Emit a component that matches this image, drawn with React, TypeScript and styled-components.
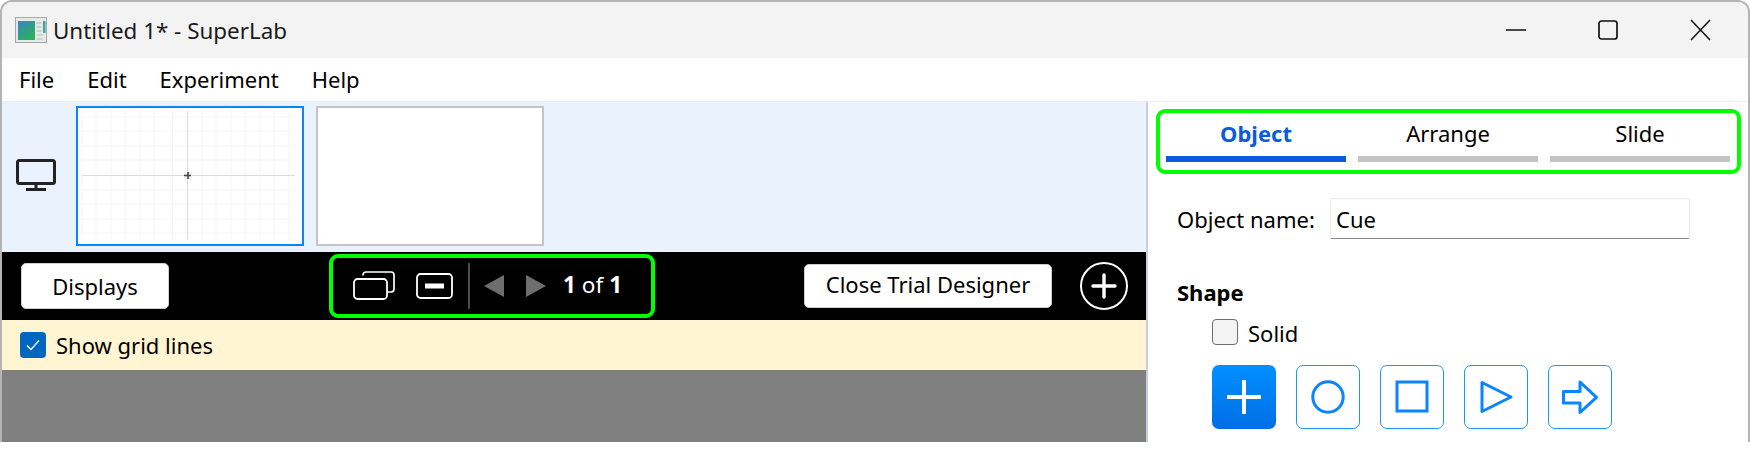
import React from "react";
import styled, { createGlobalStyle } from "styled-components";

const Global = createGlobalStyle`
  html, body { margin: 0; padding: 0; background: #fff; }
  body { width: 1750px; height: 460px; overflow: hidden; font-family: "Noto Sans", "Open Sans", sans-serif; color: #000; }
`;

const Page = styled.div`
  width: 1750px;
  height: 460px;
  background: #fff;
`;
const Window = styled.div`
  box-sizing: border-box;
  height: 442px;
  border: 2px solid #b4b4b4;
  border-bottom: 0;
  border-radius: 12px 12px 0 0;
  display: flex;
  flex-direction: column;
  overflow: hidden;
`;
const TitleBar = styled.div`
  height: 56px;
  flex: none;
  background: #f3f3f3;
  display: flex;
  align-items: center;
  padding: 0 37px 0 13px;
`;
const AppIcon = styled.svg`
  width: 32px;
  height: 26px;
  margin-right: 6px;
  flex: none;
`;
const TitleText = styled.span`
  font-size: 22.4px;
  color: #1a1a1a;
  flex: 1;
`;
const WindowControls = styled.div`
  display: flex;
  align-items: center;
  gap: 71px;
`;
const MenuBar = styled.div`
  height: 43px;
  flex: none;
  display: flex;
  align-items: center;
  gap: 33px;
  padding: 0 0 2px 17px;
  box-sizing: border-box;
  font-size: 22px;
`;
const Body = styled.div`
  flex: 1;
  display: grid;
  grid-template-columns: 1146px 1fr;
  min-height: 0;
  border-top: 1px solid #eeeeee;
`;
const LeftPane = styled.div`
  display: flex;
  flex-direction: column;
  border-right: 2px solid #c9cce3;
`;
const ThumbStrip = styled.div`
  height: 150px;
  flex: none;
  background: #eaf2fe;
  display: flex;
  align-items: flex-start;
  padding: 4px 0 0 14px;
  box-sizing: border-box;
`;
const MonitorIcon = styled.svg`
  width: 40px;
  height: 32px;
  margin: 53px 20px 0 0;
  flex: none;
`;
const Thumb = styled.div<{ $selected?: boolean }>`
  box-sizing: border-box;
  width: 228px;
  height: 140px;
  margin-right: 12px;
  background: #fff;
  border: 2px solid ${(p) => (p.$selected ? "#0a84ff" : "#c4c4c4")};
  flex: none;
  display: flex;
`;
const Toolbar = styled.div`
  height: 68px;
  flex: none;
  background: #000;
  display: flex;
  align-items: center;
  box-sizing: border-box;
  padding-left: 19px;
`;
const ToolButton = styled.button<{ $w: number; $h: number; $ml: number; $lift?: number }>`
  box-sizing: border-box;
  width: ${(p) => p.$w}px;
  height: ${(p) => p.$h}px;
  margin-left: ${(p) => p.$ml}px;
  background: #fff;
  border: 1px solid #cfcfcf;
  border-radius: 5px;
  font: inherit;
  font-size: 22px;
  color: #000;
  padding: 0 0 ${(p) => p.$lift ?? 0}px;
  flex: none;
`;
const GreenGroup = styled.div`
  box-sizing: border-box;
  margin-left: 160px;
  width: 326px;
  height: 64px;
  border: 4px solid #00ff00;
  border-radius: 9px;
  display: flex;
  align-items: center;
  flex: none;
  color: #fff;
`;
const StackIcon = styled.svg`
  width: 42px;
  height: 30px;
  margin-left: 20px;
  flex: none;
`;
const MinusIcon = styled.svg`
  width: 38px;
  height: 26px;
  margin-left: 21px;
  flex: none;
`;
const Divider = styled.div`
  width: 2px;
  height: 46px;
  background: #4d4d4d;
  margin: 0 14px 0 14px;
  flex: none;
`;
const ArrowIcon = styled.svg<{ $ml?: number }>`
  width: 20px;
  height: 22px;
  margin-left: ${(p) => p.$ml ?? 0}px;
  flex: none;
`;
const PageCount = styled.span`
  font-size: 22.6px;
  margin: 0 0 4px 17px;
  b { font-weight: 700; }
`;
const AddIcon = styled.svg`
  width: 48px;
  height: 48px;
  margin-left: 28px;
  flex: none;
`;
const Notice = styled.div`
  height: 50px;
  flex: none;
  background: #fff5d2;
  display: flex;
  align-items: center;
  padding-left: 18px;
  font-size: 22px;
`;
const CheckBox = styled.div<{ $checked?: boolean }>`
  box-sizing: border-box;
  width: 26px;
  height: 26px;
  border-radius: 4px;
  background: ${(p) => (p.$checked ? "#0067c0" : "#f3f3f3")};
  border: ${(p) => (p.$checked ? "0" : "1.5px solid #6e6e6e")};
  display: flex;
  align-items: center;
  justify-content: center;
  flex: none;
`;
const NoticeLabel = styled.span`
  margin-left: 10px;
`;
const Canvas = styled.div`
  flex: 1;
  background: #808080;
`;
const RightPane = styled.div`
  display: flex;
  flex-direction: column;
  background: #fff;
  font-size: 22px;
`;
const TabGroup = styled.div`
  box-sizing: border-box;
  margin: 7px 0 0 8px;
  width: 585px;
  height: 65px;
  border: 4px solid #00ff00;
  border-radius: 9px;
  display: grid;
  grid-template-columns: repeat(3, 180px);
  column-gap: 12px;
  padding: 0 6px;
  flex: none;
`;
const Tab = styled.div<{ $active?: boolean }>`
  height: 49px;
  box-sizing: border-box;
  border-bottom: 6px solid ${(p) => (p.$active ? "#0a5be0" : "#c4c4c4")};
  display: flex;
  justify-content: center;
  align-items: center;
  padding-bottom: 4px;
  font-weight: ${(p) => (p.$active ? 700 : 400)};
  color: ${(p) => (p.$active ? "#0a5be0" : "#000")};
`;
const NameRow = styled.div`
  display: flex;
  align-items: center;
  margin: 24px 0 0 29px;
  height: 41px;
  flex: none;
`;
const NameLabel = styled.span`
  width: 153px;
  flex: none;
`;
const NameInput = styled.div`
  box-sizing: border-box;
  width: 360px;
  height: 41px;
  border: 1px solid #ececec;
  border-bottom: 1px solid #868686;
  border-radius: 2px;
  padding-left: 5px;
  display: flex;
  align-items: center;
`;
const SectionTitle = styled.div`
  font-weight: 700;
  margin: 40px 0 0 29px;
  height: 27px;
  line-height: 27px;
  flex: none;
`;
const SolidRow = styled.div`
  display: flex;
  align-items: center;
  gap: 10px;
  margin: 12px 0 0 64px;
  height: 27px;
  flex: none;
`;
const SolidLabel = styled.span`
  margin-top: 3px;
`;
const ShapeRow = styled.div`
  display: flex;
  gap: 20px;
  margin: 20px 0 0 64px;
  flex: none;
`;
const ShapeButton = styled.div<{ $active?: boolean }>`
  box-sizing: border-box;
  width: 64px;
  height: 64px;
  border-radius: 7px;
  border: ${(p) => (p.$active ? "0" : "1px solid #1f95f5")};
  background: ${(p) => (p.$active ? "linear-gradient(#0090ff, #006ee6)" : "#fff")};
  display: flex;
  align-items: center;
  justify-content: center;
`;
const ShapeIcon = styled.svg`
  width: 40px;
  height: 40px;
`;

const gridV = [-105, -91, -76, -62, -47, -33, -14.5, 15, 29, 44, 58, 73, 87, 102];
const gridH = [-58, -44, -29, -15, 15, 29, 44, 58];

export default function App() {
  return (
    <Page>
      <Global />
      <Window>
        <TitleBar>
          <AppIcon viewBox="0 0 32 26">
            <defs>
              <linearGradient id="pane" x1="0" y1="0" x2="0.6" y2="1">
                <stop offset="0" stopColor="#3a86c4" />
                <stop offset="1" stopColor="#2cb05a" />
              </linearGradient>
            </defs>
            <rect x="0.5" y="0.5" width="31" height="25" fill="#e6e9ea" stroke="#a4a9ac" />
            <rect x="3" y="4" width="17" height="19" fill="url(#pane)" />
            <rect x="28" y="4" width="2.5" height="12" fill="#3aa59a" />
            <path d="M21.5 6h5M21.5 10h5M21.5 14h5M21.5 18h6M21.5 22h6" stroke="#b4babc" strokeWidth="1.2" />
          </AppIcon>
          <TitleText>Untitled 1* - SuperLab</TitleText>
          <WindowControls>
            <svg width="21" height="22" viewBox="0 0 21 22">
              <path d="M0 11h20" stroke="#111" strokeWidth="1.6" />
            </svg>
            <svg width="21" height="22" viewBox="0 0 21 22">
              <rect x="1" y="2" width="18" height="18" rx="2.5" fill="none" stroke="#111" strokeWidth="1.7" />
            </svg>
            <svg width="21" height="22" viewBox="0 0 21 22">
              <path d="M1 1l19 20M20 1L1 21" stroke="#111" strokeWidth="1.5" />
            </svg>
          </WindowControls>
        </TitleBar>
        <MenuBar>
          <span>File</span>
          <span>Edit</span>
          <span>Experiment</span>
          <span>Help</span>
        </MenuBar>
        <Body>
          <LeftPane>
            <ThumbStrip>
              <MonitorIcon viewBox="0 0 40 32">
                <rect x="1.5" y="1.5" width="37" height="23" rx="2" fill="none" stroke="#222" strokeWidth="3" />
                <path d="M20 25v5M10 30.5h20" stroke="#222" strokeWidth="3" />
              </MonitorIcon>
              <Thumb $selected>
                <svg width="224" height="136" viewBox="-109 -67 224 136">
                  {gridV.map((x) => (
                    <line key={x} x1={x} x2={x} y1="-64" y2="65" stroke="#f5f5f5" />
                  ))}
                  {gridH.map((y) => (
                    <line key={y} y1={y} y2={y} x1="-105" x2="108" stroke="#f5f5f5" />
                  ))}
                  <line x1="0.5" x2="0.5" y1="-64" y2="65" stroke="#dcdcdc" />
                  <line y1="0.5" y2="0.5" x1="-105" x2="108" stroke="#dcdcdc" />
                  <rect x="-3" y="-3" width="8" height="8" fill="#efefef" />
                  <path d="M1 -3v7M-3 0.5h7" stroke="#444" strokeWidth="1.6" />
                </svg>
              </Thumb>
              <Thumb />
            </ThumbStrip>
            <Toolbar>
              <ToolButton $w={148} $h={46} $ml={0}>Displays</ToolButton>
              <GreenGroup>
                <StackIcon viewBox="0 0 42 30">
                  <path d="M10 4.5V4a3 3 0 0 1 3-3h25a3 3 0 0 1 3 3v14a3 3 0 0 1-3 3h-3" fill="none" stroke="#fff" strokeWidth="1.7" />
                  <rect x="1" y="8" width="33" height="20" rx="3.5" fill="none" stroke="#fff" strokeWidth="1.8" />
                </StackIcon>
                <MinusIcon viewBox="0 0 38 26">
                  <rect x="1" y="1" width="35" height="24" rx="3.5" fill="none" stroke="#fff" strokeWidth="1.8" />
                  <rect x="9" y="10.5" width="19" height="5" fill="#fff" />
                </MinusIcon>
                <Divider />
                <ArrowIcon viewBox="0 0 20 22">
                  <path d="M20 0v22L0 11z" fill="#6e6e6e" />
                </ArrowIcon>
                <ArrowIcon $ml={22} viewBox="0 0 20 22">
                  <path d="M0 0v22l20-11z" fill="#6e6e6e" />
                </ArrowIcon>
                <PageCount>
                  <b>1</b> of <b>1</b>
                </PageCount>
              </GreenGroup>
              <ToolButton $w={248} $h={44} $ml={149} $lift={4}>Close Trial Designer</ToolButton>
              <AddIcon viewBox="0 0 48 48">
                <circle cx="24" cy="24" r="23" fill="none" stroke="#fff" strokeWidth="2" />
                <path d="M24 13v22M13 24h22" stroke="#fff" strokeWidth="3.4" strokeLinecap="round" />
              </AddIcon>
            </Toolbar>
            <Notice>
              <CheckBox $checked>
                <svg width="16" height="14" viewBox="0 0 16 14">
                  <path d="M2 7.5l4 4 8-9" fill="none" stroke="#fff" strokeWidth="1.4" />
                </svg>
              </CheckBox>
              <NoticeLabel>Show grid lines</NoticeLabel>
            </Notice>
            <Canvas />
          </LeftPane>
          <RightPane>
            <TabGroup>
              <Tab $active>Object</Tab>
              <Tab>Arrange</Tab>
              <Tab>Slide</Tab>
            </TabGroup>
            <NameRow>
              <NameLabel>Object name:</NameLabel>
              <NameInput>Cue</NameInput>
            </NameRow>
            <SectionTitle>Shape</SectionTitle>
            <SolidRow>
              <CheckBox />
              <SolidLabel>Solid</SolidLabel>
            </SolidRow>
            <ShapeRow>
              <ShapeButton $active>
                <ShapeIcon viewBox="0 0 40 40">
                  <path d="M20 3v34M3 20h34" stroke="#fff" strokeWidth="4" />
                </ShapeIcon>
              </ShapeButton>
              <ShapeButton>
                <ShapeIcon viewBox="0 0 40 40">
                  <circle cx="20" cy="20" r="15.2" fill="none" stroke="#0a84ff" strokeWidth="3" />
                </ShapeIcon>
              </ShapeButton>
              <ShapeButton>
                <ShapeIcon viewBox="0 0 40 40">
                  <rect x="5" y="5" width="30" height="29" fill="none" stroke="#0a84ff" strokeWidth="3" />
                </ShapeIcon>
              </ShapeButton>
              <ShapeButton>
                <ShapeIcon viewBox="0 0 40 40">
                  <path d="M6 5.5L35 20 6 34.5z" fill="none" stroke="#0a84ff" strokeWidth="3" strokeLinejoin="round" />
                </ShapeIcon>
              </ShapeButton>
              <ShapeButton>
                <ShapeIcon viewBox="0 0 40 40">
                  <path d="M3.5 14.5H20V5L36.5 20.3 20 35.5V26H3.5z" fill="none" stroke="#0a84ff" strokeWidth="3" strokeLinejoin="round" />
                </ShapeIcon>
              </ShapeButton>
            </ShapeRow>
          </RightPane>
        </Body>
      </Window>
    </Page>
  );
}
